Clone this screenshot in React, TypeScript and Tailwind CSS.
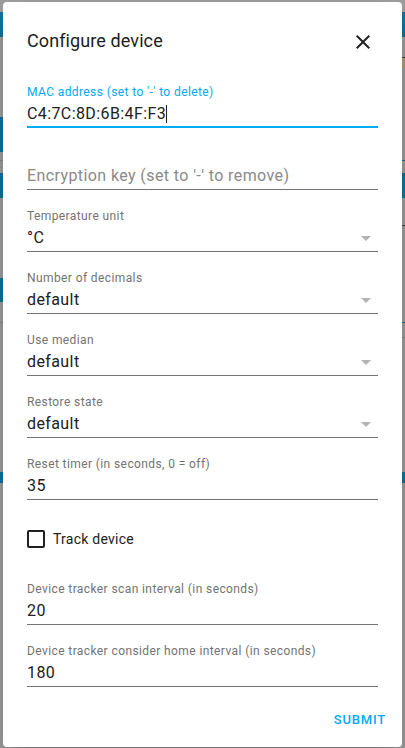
// configure device dialog - home assistant style form over dimmed page

const BG_BITS_LEFT = [
  { top: 12, h: 25, c: 'bg-[#1273a0]' },
  { top: 117, h: 35, c: 'bg-[#1273a0]' },
  { top: 160, h: 1, c: 'bg-[#7d8a92]' },
  { top: 173, h: 25, c: 'bg-[#1273a0]' },
  { top: 278, h: 24, c: 'bg-[#1273a0]' },
  { top: 322, h: 1, c: 'bg-[#8a8a8a]' },
  { top: 472, h: 11, c: 'bg-[#1273a0]' },
];

const BG_BITS_RIGHT = [
  { top: 12, h: 25, c: 'bg-[#1273a0]' },
  { top: 57, h: 1, c: 'bg-[#444]' },
  { top: 58, h: 10, c: 'bg-[#b59a6e]' },
  { top: 160, h: 1, c: 'bg-[#1273a0]' },
  { top: 173, h: 25, c: 'bg-[#1273a0]' },
  { top: 225, h: 1, c: 'bg-[#444]' },
  { top: 322, h: 1, c: 'bg-[#1273a0]' },
  { top: 337, h: 1, c: 'bg-[#8a8a8a]' },
  { top: 472, h: 11, c: 'bg-[#1273a0]' },
];

function Arrow() {
  return (
    <span className="mr-[7px] w-0 h-0 border-l-[5px] border-r-[5px] border-t-[5px] border-l-transparent border-r-transparent border-t-[#b3b3b3]" />
  );
}

function Field({ label, value, select, placeholder, first }: {
  label?: string; value?: string; select?: boolean; placeholder?: string; first?: boolean;
}) {
  return (
    <div className={first ? '' : 'mt-[18px]'}>
      <div className="text-[12px] leading-[17px] text-[#737373] tracking-[0.4px] h-[17px]">{label}</div>
      <div className="flex items-center justify-between h-[26px] border-b border-[#737373] box-content">
        {placeholder
          ? <span className="text-[16px] text-[#8a8a8a] tracking-[0.4px]">{placeholder}</span>
          : <span className="text-[16px] text-[#212121] tracking-[0.4px]">{value}</span>}
        {select && <Arrow />}
      </div>
    </div>
  );
}

export default function App() {
  return (
    <div className="relative w-[405px] h-[748px] overflow-hidden bg-[#9d9d9d]" style={{ fontFamily: 'Roboto, "Noto Sans", sans-serif' }}>
      {/* page behind the scrim */}
      {BG_BITS_LEFT.map((b, i) => (
        <div key={'l' + i} className={'absolute left-0 w-[3px] ' + b.c} style={{ top: b.top, height: b.h }} />
      ))}
      {BG_BITS_RIGHT.map((b, i) => (
        <div key={'r' + i} className={'absolute right-0 w-[3px] ' + b.c} style={{ top: b.top, height: b.h }} />
      ))}

      {/* dialog */}
      <div className="absolute left-[3px] top-[2px] w-[399px] h-[745px] bg-white rounded-[4px] shadow-[0_11px_15px_-7px_rgba(0,0,0,0.2),0_24px_38px_3px_rgba(0,0,0,0.14)] flex flex-col">
        <div className="flex items-start justify-between pl-[24px] pr-[27px] pt-[23px]">
          <h2 className="text-[18px] leading-[32px] font-normal text-[#1c1c1c] tracking-[0.1px]">Configure device</h2>
          <svg viewBox="0 0 24 24" className="w-[24px] h-[24px] mt-[5px] fill-[#212121]">
            <path d="M19,6.41L17.59,5L12,10.59L6.41,5L5,6.41L10.59,12L5,17.59L6.41,19L12,13.41L17.59,19L19,17.59L13.41,12L19,6.41Z" />
          </svg>
        </div>

        <div className="px-[24px] mt-[27px]">
          {/* focused field */}
          <div>
            <div className="text-[12px] leading-[17px] text-[#03a9f4] tracking-[0.4px]">MAC address (set to '-' to delete)</div>
            <div className="flex items-center h-[25px] border-b-2 border-[#03a9f4] box-content">
              <span className="text-[16px] text-[#212121] tracking-[0.4px]">C4:7C:8D:6B:4F:F3</span>
              <span className="inline-block w-px h-[18px] bg-[#212121]" />
            </div>
          </div>

          <Field placeholder="Encryption key (set to '-' to remove)" />
          <Field label="Temperature unit" value="°C" select />
          <Field label="Number of decimals" value="default" select />
          <Field label="Use median" value="default" select />
          <Field label="Restore state" value="default" select />
          <Field label="Reset timer (in seconds, 0 = off)" value="35" />

          <div className="flex items-center h-[40px] mt-[19px] mb-[22px]">
            <div className="w-[18px] h-[18px] border-2 border-[#212121] rounded-[2px]" />
            <span className="ml-[8px] text-[14px] text-[#212121] tracking-[0.25px]">Track device</span>
          </div>

          <Field first label="Device tracker scan interval (in seconds)" value="20" />
          <Field label="Device tracker consider home interval (in seconds)" value="180" />
        </div>

        <div className="flex justify-end pr-[8px] mt-[15px]">
          <button className="h-[36px] px-[8px] text-[13px] font-medium uppercase tracking-[0.8px] text-[#03a9f4]">Submit</button>
        </div>
      </div>
    </div>
  );
}
